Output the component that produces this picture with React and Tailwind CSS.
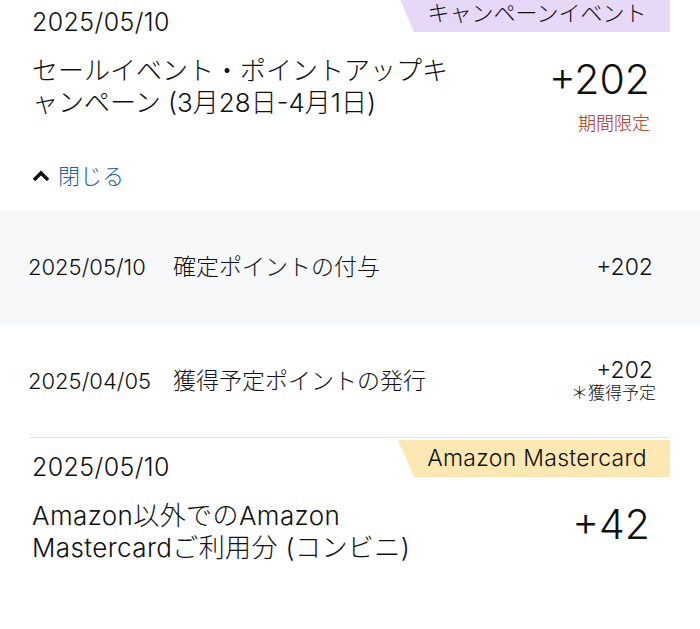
const font = { fontFamily: 'Inter, "Noto Sans CJK JP", sans-serif' };

function Badge({ children, color }) {
  return (
    <div
      className={`absolute top-0 right-[30px] h-[37px] w-[272px] flex items-center justify-center pl-[6px] text-[22px] text-[#0f1111] [clip-path:polygon(0_0,100%_0,100%_100%,16px_100%)] ${color}`}
    >
      {children}
    </div>
  );
}

function ChevronUp() {
  return (
    <svg width="18" height="12" viewBox="0 0 18 12" fill="none">
      <polyline points="2,10 9,3 16,10" stroke="#0f1111" strokeWidth="3.5" strokeLinejoin="miter" />
    </svg>
  );
}

export default function App() {
  return (
    <div className="w-[700px] h-[629px] overflow-hidden bg-white font-light text-[#0f1111]" style={font}>
      {/* campaign card */}
      <div className="relative -mt-[5px] pl-[32px] pr-[50px] pt-[11px] pb-[20px]">
        <Badge color="bg-[#e8d8f8]">キャンペーンイベント</Badge>
        <div className="text-[25px] leading-[32px] tracking-[0.4px]">2025/05/10</div>
        <div className="mt-[17px] flex items-start justify-between">
          <div className="w-[425px] text-[26px] leading-[32px]">
            セールイベント・ポイントアップキャンペーン (3月28日-4月1日)
          </div>
          <div className="text-right">
            <div className="text-[41px] leading-[48px]">+202</div>
            <div className="mt-[9px] text-[18px] leading-[24px] text-[#b12704]">期間限定</div>
          </div>
        </div>
        <div className="mt-[26px] flex items-center gap-[8px] h-[28px]">
          <ChevronUp />
          <span className="text-[22px] leading-[28px] text-[#2162a1]">閉じる</span>
        </div>
      </div>

      {/* history rows */}
      <div className="h-[115px] bg-[#f7f8fa] flex items-center pl-[28px] pr-[47px]">
        <div className="w-[145px] text-[22px]">2025/05/10</div>
        <div className="flex-1 text-[23px]">確定ポイントの付与</div>
        <div className="text-[23px]">+202</div>
      </div>
      <div className="h-[112px] flex items-center pl-[28px] pr-[47px]">
        <div className="w-[145px] text-[22px]">2025/04/05</div>
        <div className="flex-1 text-[23px]">獲得予定ポイントの発行</div>
        <div className="text-right">
          <div className="text-[23px] leading-[24px]">+202</div>
          <div className="text-[17px] leading-[22px] -mr-[3px]">＊獲得予定</div>
        </div>
      </div>
      <div className="mx-[30px] h-px bg-[#e3e3e3]" />

      {/* mastercard card */}
      <div className="relative mt-[2px] pl-[32px] pr-[50px] pt-[11px] pb-[20px]">
        <Badge color="bg-[#fde8b4]">
          <span className="text-[23px] tracking-[0.3px]">Amazon Mastercard</span>
        </Badge>
        <div className="text-[25px] leading-[32px] tracking-[0.4px]">2025/05/10</div>
        <div className="mt-[17px] flex items-start justify-between">
          <div className="w-[425px] text-[26px] leading-[32px] tracking-[0.4px]">
            Amazon以外でのAmazon Mastercardご利用分 (コンビニ)
          </div>
          <div className="text-[41px] leading-[48px]">+42</div>
        </div>
      </div>
    </div>
  );
}
